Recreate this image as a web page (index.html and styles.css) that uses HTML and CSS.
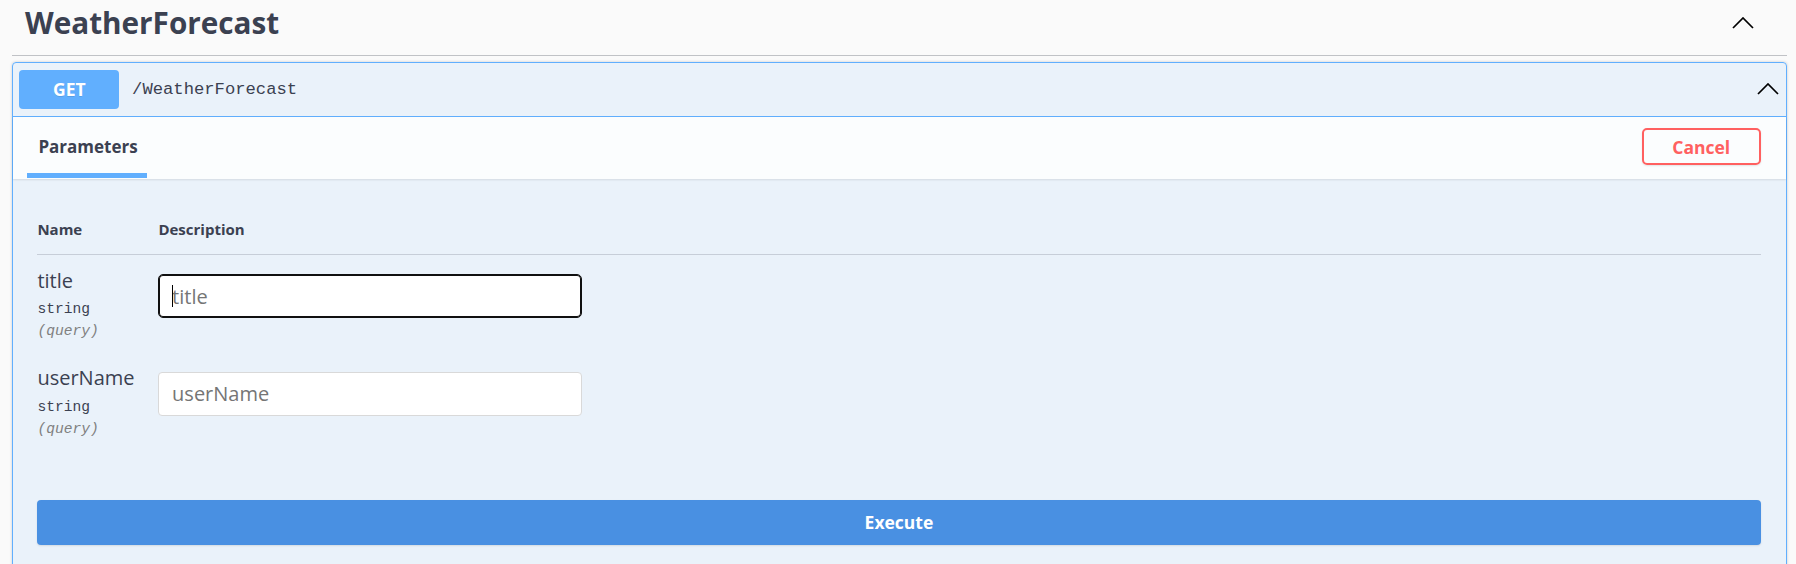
FILE: index.html
```html
<!DOCTYPE html>
<html lang="en">
<head>
<meta charset="utf-8">
<title>WeatherForecast</title>
<link rel="stylesheet" href="styles.css">
</head>
<body>
<div class="wrapper">
  <div class="tag-header">
    <h3 class="tag-title">WeatherForecast</h3>
    <svg class="chevron chevron-tag" viewBox="0 0 22 12" width="22" height="12"><polyline points="1,11 11,1 21,11"/></svg>
  </div>

  <div class="opblock">
    <div class="summary">
      <span class="method">GET</span>
      <span class="path">/WeatherForecast</span>
      <svg class="chevron chevron-op" viewBox="0 0 22 12" width="22" height="12"><polyline points="1,11 11,1 21,11"/></svg>
    </div>

    <div class="section-header">
      <div class="tab">Parameters</div>
      <button class="cancel" type="button">Cancel</button>
    </div>

    <div class="table-container">
      <div class="params-head">
        <div class="col-name">Name</div>
        <div class="col-desc">Description</div>
      </div>

      <div class="param-row">
        <div class="param-info">
          <div class="param-name">title</div>
          <div class="param-type">string</div>
          <div class="param-in">(query)</div>
        </div>
        <div class="field">
          <input class="text-input focused" type="text" placeholder="title">
          <span class="caret"></span>
        </div>
      </div>

      <div class="param-row">
        <div class="param-info">
          <div class="param-name">userName</div>
          <div class="param-type">string</div>
          <div class="param-in">(query)</div>
        </div>
        <div class="field">
          <input class="text-input" type="text" placeholder="userName">
        </div>
      </div>
    </div>

    <div class="execute-wrapper">
      <button class="execute" type="button">Execute</button>
    </div>
  </div>
</div>
</body>
</html>
```

FILE: styles.css
```css
* { box-sizing: border-box; }

html, body {
  margin: 0;
  padding: 0;
  background: #fafafa;
  font-family: "Open Sans", "Noto Sans", sans-serif;
  color: #3b4151;
}

.wrapper {
  padding: 0 9px 0 12px;
}

.tag-header {
  display: flex;
  align-items: flex-start;
  justify-content: space-between;
  height: 56px;
  padding: 0 33.5px 0 13px;
  border-bottom: 1px solid rgba(59, 65, 81, 0.3);
}

.tag-title {
  margin: 0;
  padding-top: 2.5px;
  font-size: 29.7px;
  line-height: 40px;
  font-weight: 700;
  color: #3b4151;
}

.chevron {
  display: block;
  width: 22px;
  height: 12px;
  flex: none;
}

.chevron polyline {
  fill: none;
  stroke: #000;
  stroke-width: 1.7;
}

.chevron-tag {
  margin-top: 16.5px;
}

.opblock {
  margin-top: 6px;
  border: 1px solid #61affe;
  border-radius: 4px;
  background: rgba(97, 175, 254, 0.1);
  box-shadow: 0 0 3px rgba(0, 0, 0, 0.19);
}

.summary {
  display: flex;
  align-items: center;
  padding: 7px 7px 7px 6.4px;
  border-bottom: 1px solid #61affe;
}

.method {
  display: flex;
  align-items: center;
  justify-content: center;
  width: 100px;
  height: 38.5px;
  border-radius: 4px;
  background: #61affe;
  color: #fff;
  font-size: 17.5px;
  font-weight: 700;
  text-shadow: 0 1px 0 rgba(0, 0, 0, 0.1);
}

.path {
  margin-left: 12.7px;
  font-family: "Liberation Mono", monospace;
  font-size: 17.2px;
  color: #3b4151;
}

.chevron-op {
  margin-left: auto;
}

.section-header {
  display: flex;
  align-items: stretch;
  justify-content: space-between;
  height: 62.5px;
  padding: 0 25.5px 0 14.4px;
  background: rgba(255, 255, 255, 0.8);
  box-shadow: 0 1px 2px rgba(0, 0, 0, 0.1);
}

.tab {
  display: flex;
  align-items: center;
  padding: 4px 9px 0 11px;
  margin-bottom: 1.3px;
  border-bottom: 5px solid #61affe;
  font-size: 17px;
  line-height: 1;
  font-weight: 700;
  color: #3b4151;
}

.cancel {
  align-self: center;
  margin-bottom: 2px;
  width: 118.5px;
  height: 37px;
  padding: 0;
  border: 2px solid #ff6060;
  border-radius: 5px;
  background: transparent;
  color: #ff6060;
  font-family: "Open Sans", "Noto Sans", sans-serif;
  font-size: 17.5px;
  font-weight: 700;
  box-shadow: 0 1px 2px rgba(0, 0, 0, 0.1);
}

.table-container {
  padding: 25px 25.5px 25px 24.4px;
}

.params-head {
  display: grid;
  grid-template-columns: 121px 1fr;
  padding: 15px 0;
  border-bottom: 1px solid rgba(59, 65, 81, 0.2);
  font-size: 15px;
  line-height: 20px;
  font-weight: 700;
  color: #3b4151;
}

.param-row {
  display: grid;
  grid-template-columns: 121px 1fr;
  padding: 11.5px 0 12.5px;
}

.param-name {
  font-size: 20px;
  line-height: 27px;
  color: #3b4151;
}

.param-type {
  margin-top: 7.4px;
  font-family: "Liberation Mono", monospace;
  font-size: 14.6px;
  line-height: 17px;
  color: #3b4151;
}

.param-in {
  margin-top: 5.4px;
  font-family: "Liberation Mono", monospace;
  font-style: italic;
  font-size: 14.6px;
  line-height: 17px;
  color: #808080;
}

.field {
  position: relative;
  width: 424px;
  height: 44px;
  margin-top: 7.6px;
}

.text-input {
  display: block;
  width: 100%;
  height: 100%;
  margin: 0;
  padding: 0 12.7px;
  border: 1px solid #d9d9d9;
  border-radius: 4px;
  background: #fff;
  font-family: "Open Sans", "Noto Sans", sans-serif;
  font-size: 20px;
  color: #3b4151;
  outline: none;
}

.text-input::placeholder {
  color: #757575;
  opacity: 1;
}

.text-input.focused {
  border-color: #101010;
  border-radius: 5px;
  box-shadow: inset 0 0 0 1px #101010;
}

.caret {
  position: absolute;
  left: 13.5px;
  top: 11.4px;
  width: 1px;
  height: 22px;
  background: #000;
}

.execute-wrapper {
  padding: 24.4px 25.5px 24.4px 24.4px;
}

.execute {
  display: block;
  width: 100%;
  height: 45px;
  padding: 0;
  border: none;
  border-radius: 4px;
  background: #4990e2;
  color: #fff;
  font-family: "Open Sans", "Noto Sans", sans-serif;
  font-size: 17.5px;
  font-weight: 700;
  box-shadow: 0 1px 2px rgba(0, 0, 0, 0.1);
}
```
